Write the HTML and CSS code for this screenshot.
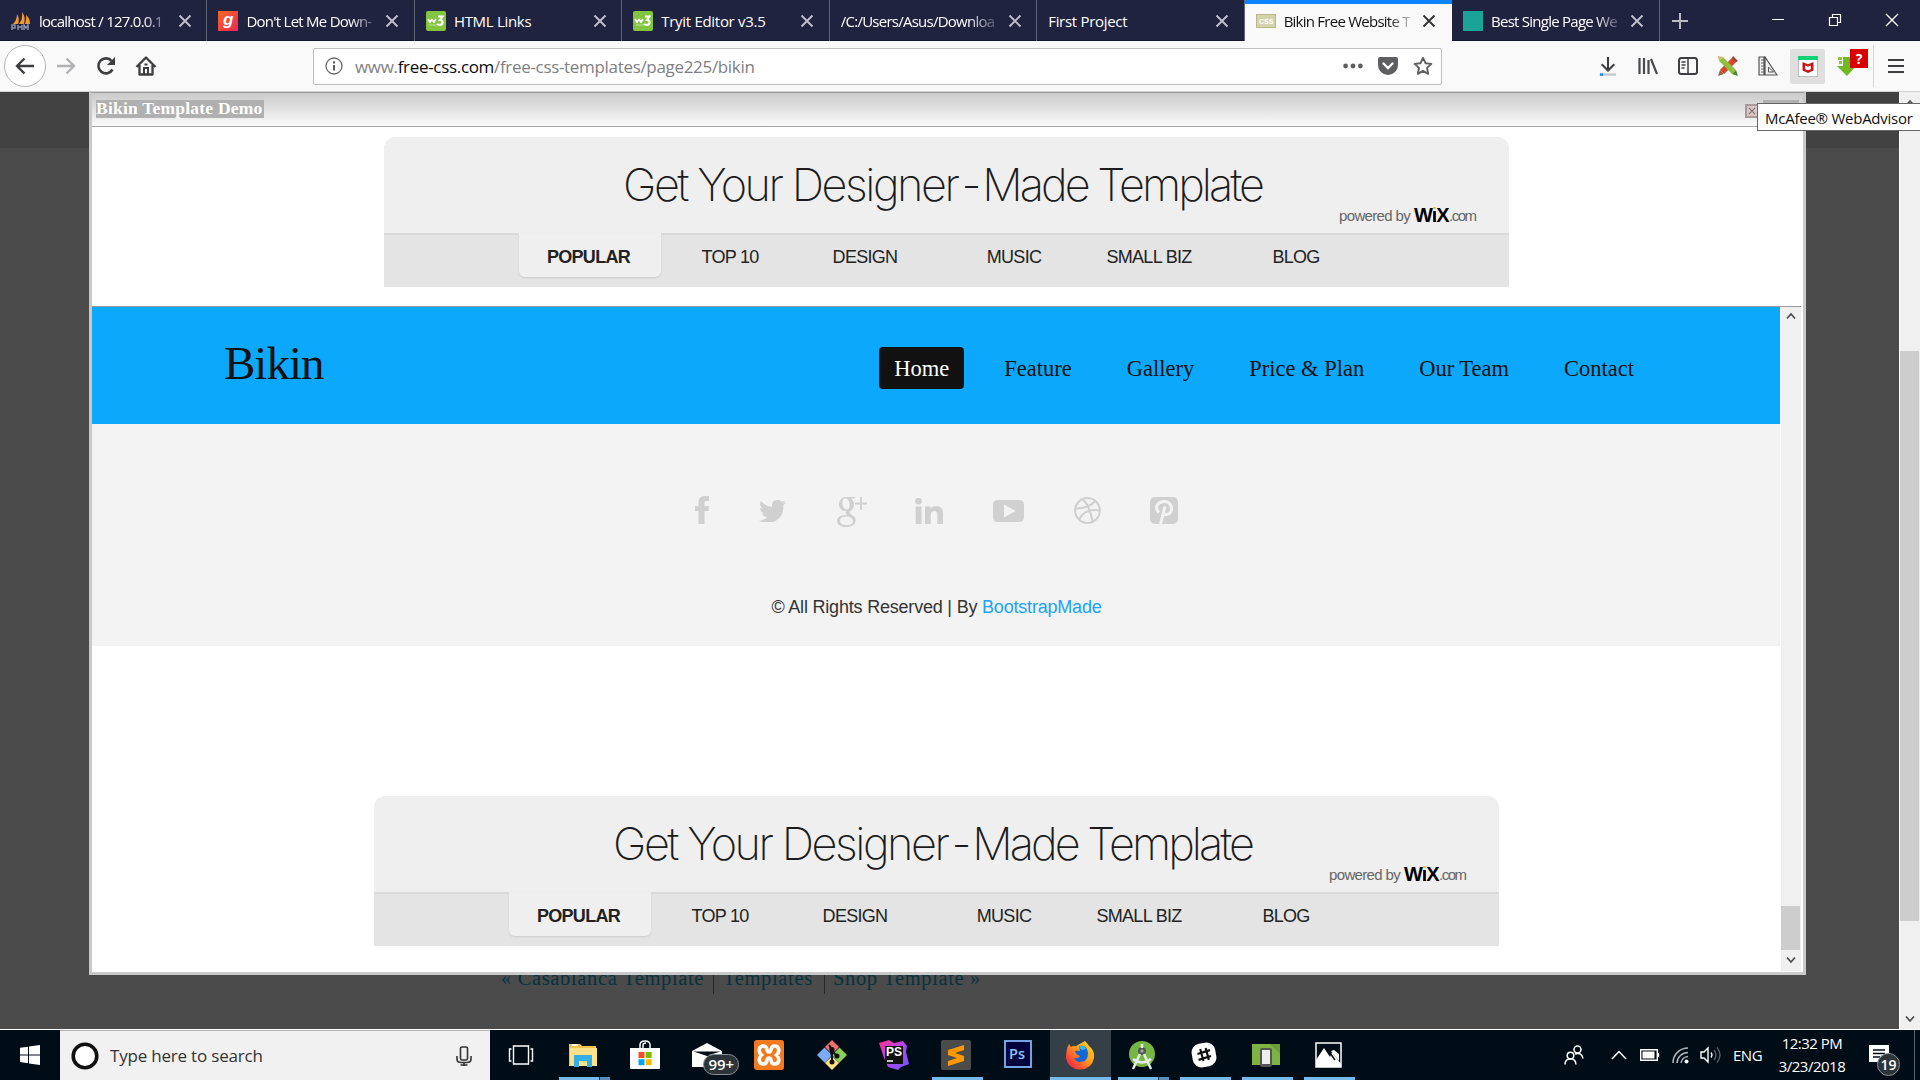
FILE: index.html
```html
<!DOCTYPE html>
<html lang="en">
<head>
<meta charset="utf-8">
<title>Bikin Free Website Template</title>
<link rel="stylesheet" href="styles.css">
</head>
<body>
<svg class="defs" width="0" height="0">
  <symbol id="x" viewBox="0 0 14 14"><path d="M1.500 1.500l11 11M12.500 1.500l-11 11" fill="none" stroke="currentColor" stroke-width="1.900"/></symbol>
  <symbol id="w3" viewBox="0 0 20 20"><rect width="20" height="20" rx="2" fill="#83c441"/><path d="M2 8l2 3 2-2.500 2 2.500 2-3" fill="none" stroke="#fff" stroke-width="1.700"/><path d="M12 5.500h4.500l-2.500 3.500c4 0 3 5-.5 5q-1.500 0-2.200-1.200" fill="none" stroke="#fff" stroke-width="2"/><path d="M3 14h8" stroke="#c4e3a4"/></symbol>
  <symbol id="up" viewBox="0 0 10 8"><path d="M1 6.500l4-4.500 4 4.500" fill="none" stroke="#505050" stroke-width="1.800"/></symbol>
  <symbol id="down" viewBox="0 0 10 8"><path d="M1 1.500l4 4.500 4-4.500" fill="none" stroke="#505050" stroke-width="1.800"/></symbol>
</svg>

<header class="tabs">
  <div class="tab">
    <svg class="fav" viewBox="0 0 20 20"><path d="M2 13Q6 9 6 3q3 5 1 10zM8 13q4-5 3-12 4 5 2 12zM14 13q2-5 1-9 4 3 4 9z" fill="#f59a2c"/><path d="M1 19v-5h3v3H1M7 19v-5M7 16h4M11 14v5M13 19v-5l2 3 2-3v5" fill="none" stroke="#8b90a8" stroke-width="1.500"/></svg>
    <span class="label fade">localhost / 127.0.0.1</span><svg class="close"><use href="#x"/></svg></div>
  <div class="tab"><svg class="fav" viewBox="0 0 20 20"><defs><linearGradient id="gg" x1="0" y1="0" x2="1" y2="1"><stop offset="0" stop-color="#f26a20"/><stop offset="1" stop-color="#ee2459"/></linearGradient></defs><rect width="20" height="20" fill="url(#gg)"/><text x="5" y="14" font-family="Liberation Sans" font-size="17" font-weight="bold" font-style="italic" fill="#fff">g</text></svg>
    <span class="label fade">Don't Let Me Down-</span><svg class="close"><use href="#x"/></svg></div>
  <div class="tab"><svg class="fav"><use href="#w3"/></svg><span class="label">HTML Links</span><svg class="close"><use href="#x"/></svg></div>
  <div class="tab"><svg class="fav"><use href="#w3"/></svg><span class="label">Tryit Editor v3.5</span><svg class="close"><use href="#x"/></svg></div>
  <div class="tab"><span class="label fade">/C:/Users/Asus/Downloa</span><svg class="close"><use href="#x"/></svg></div>
  <div class="tab"><span class="label">First Project</span><svg class="close"><use href="#x"/></svg></div>
  <div class="tab active"><svg class="fav" viewBox="0 0 20 20"><rect x="0" y="3" width="20" height="14" fill="#b9b98a"/><rect x="1" y="4" width="18" height="12" fill="#d3d3ae"/><text x="3" y="13" font-family="Liberation Sans" font-size="7" font-weight="bold" fill="#fff">CSS</text></svg>
    <span class="label fade">Bikin Free Website T</span><svg class="close"><use href="#x"/></svg></div>
  <div class="tab last"><svg class="fav" viewBox="0 0 20 20"><rect width="20" height="20" fill="#1aa497"/></svg>
    <span class="label fade">Best Single Page We</span><svg class="close"><use href="#x"/></svg></div>
  <svg class="plus" viewBox="0 0 18 18"><path d="M9 1v16M1 9h16" stroke="#b9bac6" stroke-width="2"/></svg>
  <div class="winbtns">
    <svg viewBox="0 0 14 14"><path d="M1 6.500h12" stroke="#fff"/></svg>
    <svg viewBox="0 0 14 14"><path d="M1.500 4.500h8v8h-8zM4.500 4V1.500h8v8H10" fill="none" stroke="#fff" stroke-width="1.200"/></svg>
    <svg viewBox="0 0 14 14"><path d="M1 1l12 12M13 1L1 13" stroke="#fff" stroke-width="1.300"/></svg>
  </div>
</header>

<nav class="toolbar">
  <div class="navbtns">
    <span class="back"><svg width="20" height="18" viewBox="0 0 20 18"><path d="M19 9H2M9.500 1.500L2 9l7.500 7.500" fill="none" stroke="#3e3e41" stroke-width="2.400"/></svg></span>
    <svg width="20" height="18" viewBox="0 0 20 18"><path d="M1 9h17M10.500 1.500L18 9l-7.500 7.500" fill="none" stroke="#b1b1b3" stroke-width="2.400"/></svg>
    <svg width="20" height="20" viewBox="0 0 20 20"><path d="M16.500 13.500a7.500 7.500 0 1 1-.8-8.500" fill="none" stroke="#3e3e41" stroke-width="2.600"/><path d="M19 1v8h-8z" fill="#3e3e41"/></svg>
    <svg width="22" height="20" viewBox="0 0 22 20"><path d="M1.500 11L11 1.500 20.500 11M4.500 9v9.500h13V9" fill="none" stroke="#3e3e41" stroke-width="2.300" stroke-linejoin="round"/><path d="M9 18v-6h4v6M9.500 8.500h3" stroke="#3e3e41" stroke-width="2" fill="none"/></svg>
  </div>
  <div class="urlbar">
    <svg width="18" height="18" viewBox="0 0 18 18"><circle cx="9" cy="9" r="8" fill="none" stroke="#6a6a6c" stroke-width="1.300"/><path d="M9 8v5.500M9 4.300v2.200" stroke="#5a5a5c" stroke-width="2"/></svg>
    <span class="url">www.<b>free-css.com</b>/free-css-templates/page225/bikin</span>
    <svg width="20" height="6" viewBox="0 0 20 6"><g fill="#5f5f61"><circle cx="2.600" cy="3" r="2.400"/><circle cx="10" cy="3" r="2.400"/><circle cx="17.400" cy="3" r="2.400"/></g></svg>
    <svg width="20" height="18" viewBox="0 0 20 18"><path d="M2 0h16q2 0 2 2v6a10 10 0 0 1-20 0V2q0-2 2-2z" fill="#5f5f61"/><path d="M5.500 6.500L10 11l4.500-4.500" fill="none" stroke="#fff" stroke-width="2.300" stroke-linecap="round"/></svg>
    <svg width="20" height="20" viewBox="0 0 20 20"><path d="M10 1.800l2.500 5.400 5.900.7-4.400 4 1.200 5.900L10 14.900l-5.200 2.900L6 11.900l-4.400-4 5.900-.7z" fill="none" stroke="#5f5f61" stroke-width="1.900" stroke-linejoin="round"/></svg>
  </div>
  <div class="tools">
    <span><svg width="18" height="20" viewBox="0 0 20 22"><path d="M10 1v14M3 9l7 7 7-7" fill="none" stroke="#3e3e41" stroke-width="2.300"/><path d="M1 20.500h18" stroke="#c6c6c8" stroke-width="2.500"/><path d="M1 20.500h3.500" stroke="#0a84ff" stroke-width="2.500"/></svg></span>
    <span><svg width="20" height="18" viewBox="0 0 20 18"><path d="M1.500 1v16M6 1v16M10.500 3v14M13 2l6 15" stroke="#4a4a4d" stroke-width="2.200"/></svg></span>
    <span><svg width="20" height="18" viewBox="0 0 20 18"><rect x="1" y="1" width="18" height="16" rx="2.500" fill="none" stroke="#3e3e41" stroke-width="2"/><path d="M10 1v16M3.500 5h4M3.500 8h4M3.500 11h3" stroke="#3e3e41" stroke-width="1.500"/></svg></span>
    <span><svg width="22" height="22" viewBox="0 0 22 22"><path d="M18 4L5 17" stroke="#d6452f" stroke-width="6"/><path d="M16 1l5 5-2 1-4-4z" fill="#8d4b35"/><path d="M4 4l13 13" stroke="#8fbf3c" stroke-width="5.500"/><path d="M1 1l5 1-4 4z" fill="#d8b26b"/><path d="M15 19l4-4 2 6z" fill="#4c8b2c"/><path d="M1 21l2-6 4 4z" fill="#8d6b45"/></svg></span>
    <span><svg width="20" height="20" viewBox="0 0 20 20"><path d="M1 1h5v18H1zM7 1v18h12z" fill="#eee" stroke="#555" stroke-width="1.200"/><path d="M10.500 11v5h5z" fill="#f9f9fa" stroke="#555"/><path d="M3 4h3M3 7h3M3 10h3M3 13h3M3 16h3" stroke="#666"/></svg></span>
    <span class="hot"><svg width="20" height="21" viewBox="0 0 20 21"><rect x=".5" y=".5" width="19" height="20" fill="#fff" stroke="#bcbcbc"/><path d="M0 0h20v4H0z" fill="#12d176"/><path d="M4.500 6l5.500 2.200L15.500 6v8.500L10 17l-5.500-2.500z" fill="#c01818"/><path d="M7.200 9.500l2.800 1.300 2.800-1.300v3.700L10 14.300l-2.800-1.100z" fill="#fff"/></svg></span>
    <span class="dl"><svg width="22" height="22" viewBox="0 0 22 22"><path d="M7 2h8v9h5l-9 10-10-10h6z" fill="#6fb821"/><path d="M2 2h4v3H2zM3 6h3v3H3z" fill="#8ac93b"/></svg><em>?</em></span>
    <i class="sep"></i>
    <svg width="16" height="16" viewBox="0 0 16 16"><path d="M0 2h16M0 8h16M0 14h16" stroke="#3e3e41" stroke-width="2.200"/></svg>
  </div>
</nav>

<main class="page">
  <div class="under">
    <div class="band"></div>
    <div class="pager"><a>« Casablanca Template</a><a>Templates</a><a>Shop Template »</a></div>
  </div>
  <div class="scroll outer"><svg><use href="#up"/></svg><div class="thumb"></div><svg><use href="#down"/></svg></div>

  <section class="modal">
    <div class="mhead"><span class="mtitle">Bikin Template Demo</span><span class="mx"><svg width="8" height="8"><use href="#x"/></svg></span><span class="mclose">Close</span></div>
    <div class="adrow">
      <div class="ad">
        <div class="adtop"><span class="adtitle">Get Your Designer<i> - </i><em>Made Template</em></span><span class="pow">powered by</span><span class="wix">W<u>i</u>X</span><span class="com">.com</span></div>
        <div class="adnav"><b>POPULAR</b><span class="n2">TOP 10</span><span class="n3">DESIGN</span><span class="n4">MUSIC</span><span class="n5">SMALL BIZ</span><span class="n6">BLOG</span></div>
      </div>
    </div>
    <div class="frame">
      <div class="content">
        <div class="hero"><div class="logo">Bikin</div><div class="menu"><a class="on">Home</a><a>Feature</a><a>Gallery</a><a>Price &amp; Plan</a><a>Our Team</a><a>Contact</a></div></div>
        <div class="foot">
          <div class="social">
            <svg class="s1" width="14" height="28" viewBox="0 0 14 28"><path d="M3.500 28V15H0v-5h3.500V7c0-5 2-7 6.500-7h4v5h-2.500C10 5 9.500 5.500 9.500 7v3H14l-.6 5H9.500v13z"/></svg>
            <svg class="s2" width="27" height="22" viewBox="0 0 27 22"><path d="M27 2.600a11 11 0 0 1-3.200.9A5.500 5.500 0 0 0 26.200.4a11 11 0 0 1-3.500 1.300 5.500 5.500 0 0 0-9.500 5.100A15.700 15.700 0 0 1 1.900 1a5.500 5.500 0 0 0 1.700 7.400 5.500 5.500 0 0 1-2.500-.7 5.500 5.500 0 0 0 4.400 5.500 5.500 5.500 0 0 1-2.500.1 5.500 5.500 0 0 0 5.200 3.800A11.100 11.100 0 0 1 0 20.500 15.700 15.700 0 0 0 24.200 5.500 11 11 0 0 0 27 2.600z"/></svg>
            <svg class="s3" width="30" height="30" viewBox="0 0 30 30"><path fill-rule="evenodd" d="M8.500 0H19l-2 1.500h-3c4 3 4 9.500 0 12-3 2-1 3 1 4.500 3 2 4 3.500 3.500 6C18 28 14 30 9 30c-6 0-9-2.500-9-6 0-4 4-6 10-6-1.500-1.300-1.500-2.500-1-4C4.500 14 2 11 2 7.500 2 3.500 5 0 8.500 0zM8 1.300c-2 .3-3 2.700-2.500 6 .6 3.500 2.500 5.500 4.500 5.300 2-.3 3-2.700 2.500-6C12 3 10 1 8 1.300zM10 19.500c-4 0-7 1.500-7 4.300 0 2.700 2.500 4.400 6.500 4.400S16 26.700 16 24.300c0-2-1.500-3-4-4.800z"/><path d="M23 0h2v5.500h5v1.900h-5v5.500h-2V7.400h-5V5.500h5z"/></svg>
            <svg class="s4" width="28" height="26" viewBox="0 0 28 26"><circle cx="3.500" cy="3" r="3.400"/><path d="M.7 8.500h5.800V26H.7zM10 8.500h5.400v2.400c1-1.700 3-2.800 5.500-2.800C26 8.100 28 11 28 16v10h-5.700v-9c0-2.500-.7-4-3-4-2.500 0-3.500 1.700-3.500 4v9H10z"/></svg>
            <svg class="s5" width="31" height="22" viewBox="0 0 31 22"><path fill-rule="evenodd" d="M5 0h21q5 0 5 5v12q0 5-5 5H5q-5 0-5-5V5q0-5 5-5zM11 4.500v13l11.500-6.500z"/></svg>
            <svg class="s6" width="27" height="27" viewBox="0 0 27 27"><g fill="none" stroke="#d0d0d0" stroke-width="2"><circle cx="13.500" cy="13.500" r="12.400"/><path d="M9 2c5 6 8 13 9.500 22.500M1.500 11.500c9 0 15-2 20-7.500M5 22.500c4-8 11-11 21-9"/></g></svg>
            <svg class="s7" width="28" height="27" viewBox="0 0 28 27"><rect width="28" height="27" rx="5"/><path d="M8.800 15.500C4 10 8 4.500 14.300 4.500c8.500 0 9.700 12 2.500 13-2.500.2-3.800-1.500-3.800-1.500M15 9.500L10.500 27" fill="none" stroke="#f3f3f3" stroke-width="3"/></svg>
          </div>
          <p>© All Rights Reserved | By <a>BootstrapMade</a></p>
        </div>
        <div class="ad second">
          <div class="adtop"><span class="adtitle">Get Your Designer<i> - </i><em>Made Template</em></span><span class="pow">powered by</span><span class="wix">W<u>i</u>X</span><span class="com">.com</span></div>
          <div class="adnav"><b>POPULAR</b><span class="n2">TOP 10</span><span class="n3">DESIGN</span><span class="n4">MUSIC</span><span class="n5">SMALL BIZ</span><span class="n6">BLOG</span></div>
        </div>
      </div>
      <div class="scroll inner"><svg><use href="#up"/></svg><div class="thumb"></div><svg><use href="#down"/></svg></div>
    </div>
  </section>
  <div class="tooltip">McAfee® WebAdvisor</div>
</main>

<footer class="taskbar">
  <div class="start"><svg width="20" height="20" viewBox="0 0 20 20"><path d="M0 2.800L8 1.700v7.700H0zM9 1.500L20 0v9.400H9zM0 10.400h8v7.800l-8-1.100zM9 10.400h11V20L9 18.400z" fill="#fff"/></svg></div>
  <div class="search"><svg width="28" height="28" viewBox="0 0 28 28"><circle cx="14" cy="14" r="11.800" fill="#fff" stroke="#111" stroke-width="3.600"/></svg><span>Type here to search</span><svg width="16" height="20" viewBox="0 0 16 20"><rect x="4.500" y="1" width="7" height="13" rx="1.500" fill="none" stroke="#333" stroke-width="1.600"/><path d="M1 10v3q0 3.500 4 3.500h6q4 0 4-3.500v-3M8 16.500V20M4.500 19h7" fill="none" stroke="#333" stroke-width="1.600"/></svg></div>
  <div class="apps">
    <div><svg width="26" height="20" viewBox="0 0 26 20"><path d="M5.500 1h15v18h-15zM3.500 4H1.500v12h2M22.500 4h2v12h-2" fill="none" stroke="#fff" stroke-width="1.400"/></svg></div>
    <div class="run two"><svg width="28" height="24" viewBox="0 0 28 24"><path d="M0 1h11l2 2h14v20H0z" fill="#f2c14c"/><path d="M1 5h27v18H1z" fill="#ffe08a"/><path d="M3 1h6v2H3z" fill="#fff"/><path d="M5 24V12h18v12h-5v-6h-8v6z" fill="#35aee6"/></svg></div>
    <div><svg width="30" height="30" viewBox="0 0 30 30"><path d="M10 9V5q0-4 5-4t5 4v4M13 9V5q0-2 3-2" fill="none" stroke="#fff" stroke-width="1.500"/><path d="M0 8h30v20q0 1-1 1H1q-1 0-1-1z" fill="#fff"/><path d="M8.500 12h6v6h-6z" fill="#f25022"/><path d="M15.700 12h6v6h-6z" fill="#7fba00"/><path d="M8.500 19.200h6v6h-6z" fill="#00a4ef"/><path d="M15.700 19.200h6v6h-6z" fill="#ffb900"/></svg></div>
    <div class="mail"><svg width="30" height="24" viewBox="0 0 30 24"><path d="M0 8L15 0l15 8v16H0z" fill="#fff"/><path d="M1.500 8.500h27L17 12l4 3z" fill="#000d17"/></svg><span>99+</span></div>
    <div><svg width="30" height="30" viewBox="0 0 30 30"><rect width="30" height="30" rx="3" fill="#f37a20"/><path d="M9.500 6c5 0 2 6 5.500 6s.5-6 5.500-6 5.500 6 2 9c3.500 3 3 9-2 9s-2-6-5.500-6-.5 6-5.500 6-5.500-6-2-9c-3.500-3-3-9 2-9z" fill="none" stroke="#fff" stroke-width="3.600"/></svg></div>
    <div><svg width="30" height="30" viewBox="0 0 30 30"><path d="M15 0l7 7-7 7-7-7z" fill="#f2706d"/><path d="M7.500 7.500L15 15l-7 8-8-8z" fill="#7cabf8"/><path d="M22.500 7.500L30 15l-8 8-7-8z" fill="#8cd05c"/><path d="M15 16l7 7-7 7-7-7z" fill="#ffe080"/><path d="M12 5l3 4v14M15 11l5 5" stroke="#111" stroke-width="2"/><g fill="#111"><circle cx="15" cy="9.500" r="2.500"/><circle cx="20" cy="16" r="2.500"/><circle cx="15" cy="22" r="2.500"/></g></svg></div>
    <div><svg width="30" height="30" viewBox="0 0 30 30"><defs><linearGradient id="pg" x1="0" y1="0" x2="1" y2="1"><stop offset="0" stop-color="#fc318c"/><stop offset=".5" stop-color="#b345f1"/><stop offset="1" stop-color="#6b57ff"/></linearGradient></defs><path d="M0 3l10-3 5 3 9-2 4 5-1 6 3 12-8 3-3 3-10-3-4-9z" fill="url(#pg)"/><rect x="6" y="6" width="18" height="18" fill="#111"/><path d="M8 21h6" stroke="#fff" stroke-width="1.500"/><text x="7" y="16" font-family="Liberation Sans" font-size="12" font-weight="bold" fill="#fff">PS</text></svg></div>
    <div class="run"><svg width="30" height="30" viewBox="0 0 30 30"><rect width="30" height="30" rx="2" fill="#4b4b4b"/><path d="M23 5v5l-9 3 9 3v5L7 26v-5l9-3-9-3v-5z" fill="#ff9800"/></svg></div>
    <div class="ps"><svg width="28" height="28" viewBox="0 0 28 28"><rect x="1" y="1" width="26" height="26" fill="#00033c" stroke="#7fb6f5" stroke-width="1.800"/><text x="5" y="19" font-family="Open Sans" font-size="14.500" font-weight="600" fill="#8fc4ff">Ps</text></svg></div>
    <div class="run cur"><svg width="28" height="29" viewBox="0 0 28 29"><defs><linearGradient id="fg" x1="1" y1="0" x2="0" y2="1"><stop offset="0" stop-color="#ffe226"/><stop offset=".45" stop-color="#ff9a1e"/><stop offset=".8" stop-color="#ff3a3a"/><stop offset="1" stop-color="#e31587"/></linearGradient></defs><path d="M19 0q3 3 4 5 6 5 5 12-2 11-14 11.500Q2 28 0 17 0 8 3 3l2 3q3-2 5-1z" fill="url(#fg)"/><path d="M13 5q8-2 9 7 0 9-8 9-4 0-6-4 4 1 6-2-4-1-5-5 2-1 5 0-1-3-1-5z" fill="#1267d6"/><path d="M13 5q5-1 7 3l-3 1q-3 0-4-4z" fill="#31b8f5"/></svg></div>
    <div class="run two"><svg width="28" height="30" viewBox="0 0 28 30"><circle cx="14" cy="14" r="13" fill="#78b643"/><circle cx="14" cy="11" r="4" fill="#4d5a55"/><path d="M14 4v4M12 14L5 29M16 14l7 15M5 19q9 7 18 0" fill="none" stroke="#e6ebe9" stroke-width="2.500"/><circle cx="14" cy="11" r="1.600" fill="#aaa"/></svg></div>
    <div class="run"><svg width="26" height="26" viewBox="0 0 24 24"><rect x="1" y="1" width="22" height="22" rx="8" fill="#fff" transform="rotate(-10 12 12)"/><path d="M8.500 6.500l3 11M13.500 5.500l3 11M6 11l11.500-3.500M7 16.500L18.500 13" stroke="#111" stroke-width="2"/></svg></div>
    <div class="run"><svg width="28" height="24" viewBox="0 0 28 24"><rect y="1" width="28" height="21" fill="#7cb342"/><path d="M18 1h10v10z" fill="#689f38"/><rect x="8" y="5" width="12" height="19" rx="2" fill="#555"/><rect x="10" y="7" width="8" height="14" fill="#eee"/></svg></div>
    <div class="run"><svg width="27" height="26" viewBox="0 0 27 26"><rect x="1" y="1" width="25" height="24" fill="#000d17" stroke="#fff" stroke-width="1.500"/><path d="M1 25V18l8-12 6 9 2-5 9 12v3z" fill="#fff"/><path d="M16 9l8 10V12l-5-4z" fill="#fff"/><path d="M15 11l5 7" stroke="#000d17" stroke-width="1.500"/></svg></div>
  </div>
  <div class="tray">
    <svg width="20" height="20" viewBox="0 0 20 20"><g fill="none" stroke="#fff" stroke-width="1.500"><circle cx="13.500" cy="4.500" r="3.500"/><circle cx="6.500" cy="10.500" r="3.300"/><path d="M1 19.500q0-5.500 5.500-5.700 5 0 5.500 5.700M11 9q7-2 8 4.500"/></g></svg>
    <svg class="t2" width="16" height="10" viewBox="0 0 16 10"><path d="M1 9l7-7.500L15 9" fill="none" stroke="#fff" stroke-width="1.500"/></svg>
    <svg class="t3" width="20" height="12" viewBox="0 0 20 12"><path d="M.7.7h16.600v10.600H.7zM18.500 4v4" fill="none" stroke="#fff" stroke-width="1.400"/><path d="M2.500 2.500h12v7h-12z" fill="#fff"/></svg>
    <svg class="t4" width="17" height="17" viewBox="0 0 17 17"><g fill="none" stroke="#aeb4b9" stroke-width="1.500"><path d="M1 16A15 15 0 0 1 16 1M5 16A11 11 0 0 1 16 5.500M9 16a7.500 7.500 0 0 1 7-6.500"/></g><circle cx="14.500" cy="14.500" r="2" fill="#fff"/></svg>
    <svg class="t5" width="21" height="18" viewBox="0 0 21 18"><path d="M1 6h3l4-4v14l-4-4H1z" fill="none" stroke="#fff" stroke-width="1.400"/><path d="M11 6.500q2 2.500 0 5" fill="none" stroke="#fff" stroke-width="1.300"/><path d="M14 4q4 5 0 10M17 1.500q6 7.500 0 15" fill="none" stroke="#59636b" stroke-width="1.300"/></svg>
    <span class="eng">ENG</span>
    <div class="clock"><span>12:32 PM</span><span>3/23/2018</span></div>
    <div class="note"><svg width="20" height="22" viewBox="0 0 20 22"><path d="M0 0h20v17H0z" fill="#fff"/><path d="M4 5h12M4 8.500h12M4 12h7" stroke="#000d17" stroke-width="1.300"/></svg><span>19</span></div>
    <i class="edge"></i>
  </div>
</footer>
</body>
</html>
```
FILE: styles.css
```css
* { box-sizing: border-box; }
body { margin: 0; width: 1920px; height: 1080px; overflow: hidden; display: flex; flex-direction: column; font-family: "Open Sans", "Noto Sans", sans-serif; }
svg { display: block; flex: none; }
.defs { position: absolute; }

/* tab strip */
.tabs { height: 41px; flex: none; display: flex; background: #202340; border-bottom: 1px solid #15172c; color: #fff; }
.tab { width: 207.450px; height: 41px; flex: none; display: flex; align-items: center; padding: 0 14.700px 0 11px; border-right: 1px solid #62647a; }
.tab .fav { width: 20px; height: 20px; margin-right: 8px; }
.tab .label { flex: 1; min-width: 0; overflow: hidden; white-space: nowrap; font-size: 15px; line-height: 22px; letter-spacing: -.3px; margin-right: 5px; }
.tab .fade { letter-spacing: -.75px; -webkit-mask-image: linear-gradient(90deg, #000 78%, transparent 100%); mask-image: linear-gradient(90deg, #000 78%, transparent 100%); }
.tab .close { width: 14px; height: 14px; color: #c0c1cc; }
.tab.active { background: #f9f9fa; color: #111; border-top: 4px solid #0a84ff; border-right: 0; padding-bottom: 4px; padding-right: 15.700px; }
.tab.active .close { color: #333; }
.plus { width: 18px; height: 18px; margin: 12px 0 0 11px; }
.winbtns { margin-left: auto; display: flex; gap: 43px; padding: 13px 21px 0 0; }
.winbtns svg { width: 14px; height: 14px; }

/* toolbar */
.toolbar { height: 51px; flex: none; display: flex; background: #f9f9fa; border-bottom: 1px solid #d2d2d2; align-items: center; }
.navbtns { width: 313px; display: flex; align-items: center; padding-left: 4px; gap: 19.500px; }
.navbtns .back { width: 42px; height: 42px; border: 1px solid #b5b5b6; border-radius: 50%; background: #fff; display: flex; align-items: center; justify-content: center; margin-right: -9.500px; }
.urlbar { width: 1129px; height: 37px; border: 1px solid #bdbdbf; border-radius: 2px; background: #fff; display: flex; align-items: center; gap: 15px; padding: 0 8px 0 11px; }
.url { flex: 1; margin-left: -3px; padding-top: 1px; font-size: 17px; line-height: 24px; letter-spacing: -.32px; color: #808082; white-space: nowrap; }
.url b { font-weight: 400; color: #0c0c0d; }
.tools { margin-left: 146px; display: flex; align-items: center; }
.tools span { width: 40px; height: 35px; display: flex; align-items: center; justify-content: center; position: relative; }
.tools .hot { width: 35px; margin: 0 2px; background: #dfdfe0; border-radius: 2px; }
.tools em { position: absolute; left: 23px; top: 0; width: 18px; height: 19px; background: #db0000; color: #fff; font: bold 14px/19px "Open Sans", sans-serif; text-align: center; }
.tools .sep { width: 1px; height: 42px; background: #d7d7d8; margin: 0 14px 0 6px; }

/* dimmed page */
.page { height: 937px; flex: none; position: relative; display: flex; background: #4b4b4b; }
.under { flex: 1; display: flex; flex-direction: column; justify-content: space-between; }
.band { height: 56px; background: #424242; }
.pager { display: flex; height: 65px; padding-left: 501px; font: 20.500px/28px "Liberation Serif", serif; letter-spacing: .65px; color: #07323e; white-space: nowrap; }
.pager a { height: 30px; margin-right: 8px; padding-right: 8px; border-right: 1px solid #292929; }
.pager a:last-child { border: 0; }
.pager a:first-child { width: 213px; }
.pager a:nth-child(2) { width: 102px; margin-left: 1px; }

.scroll { width: 21px; background: #f0f0f0; border-left: 1px solid #fff; display: flex; flex-direction: column; align-items: center; }
.scroll svg { width: 10px; height: 8px; }
.scroll .thumb { width: 19px; background: #cdcdcd; }
.outer { padding-top: 7px; padding-right: 1px; }
.outer .thumb { height: 570px; margin: 244px 0 94px; }
.inner { padding: 5px 1px 0 0; height: 664px; }
.inner .thumb { height: 44px; margin: 586px 0 6px; }

/* lightbox */
.modal { position: absolute; left: 89px; top: 0; width: 1717px; height: 883px; background: #fff; border: 3px solid #c9c9c9; border-top: 1px solid #999; }
.mhead { height: 34px; display: flex; background: linear-gradient(#cacaca, #fafafa); border-bottom: 1px solid #a5a5a5; padding: 7px 4px; }
.mtitle { height: 18px; width: 168px; background: #b0b0b0; color: #fff; font: bold 17.500px/17px "Liberation Serif", serif; letter-spacing: .22px; white-space: nowrap; }
.mx { margin: 4px 4px 0 auto; width: 14px; height: 14px; border: 2px solid #a99; background: #dcc5c5; color: #777; display: flex; align-items: center; justify-content: center; }
.mclose { width: 36px; height: 18px; background: #b0b0b0; color: #fff; font: bold 14px/18px "Liberation Serif", serif; }
.adrow { height: 180px; padding: 10px 0 0 292px; border-bottom: 1px solid #9a9a9a; margin-right: 2px; }
.ad { width: 1125px; height: 150px; border-radius: 12px 12px 0 0; background: #e4e4e4; overflow: hidden; font-family: "Liberation Sans", sans-serif; }
.adtop { height: 96px; background: #efefef; display: flex; white-space: nowrap; padding-left: 239px; }
.adtitle { width: 716px; font: 200 45px/95px Inter, Roboto, sans-serif; letter-spacing: -2.450px; color: #1c1c1c; }
.adtitle i { font-style: normal; letter-spacing: -8.500px; padding-right: 5px; }
.adtitle em { font-style: normal; letter-spacing: -2.950px; }
.pow, .com { font-size: 15px; line-height: 20px; letter-spacing: -.65px; margin-top: 69px; color: #666; }
.pow { width: 75px; }
.wix { width: 35px; margin-top: 67px; font-size: 20px; line-height: 22px; font-weight: bold; letter-spacing: -1px; color: #000; }
.wix u { text-decoration: none; background: linear-gradient(#f5c518 7px, #000 7px); -webkit-background-clip: text; background-clip: text; color: transparent; }
.com { letter-spacing: -1.500px; }
.adnav { height: 54px; display: flex; padding-left: 135px; border-top: 2px solid #dadada; font-size: 18px; line-height: 45px; letter-spacing: -.7px; color: #222; text-align: center; }
.adnav b { width: 142px; height: 44px; margin-top: -2px; padding-right: 3px; line-height: 49px; background: #efefef; border-radius: 0 0 6px 6px; box-shadow: 0 1px 2px #ccc; }
.n2 { width: 138px; } .n3 { width: 132px; } .n4 { width: 166px; } .n5 { width: 104px; } .n6 { width: 190px; }
.frame { display: flex; height: 665px; }
.content { width: 1688px; }
.hero { height: 117px; background: #0ca8fb; display: flex; padding: 0 131px 0 132px; justify-content: space-between; font-family: "Liberation Serif", serif; color: #111; }
.logo { font-size: 47px; line-height: 56px; padding-top: 28px; letter-spacing: -1px; }
.menu { display: flex; gap: 25px; padding-top: 40px; }
.menu a { height: 42px; padding: 0 15px; font-size: 22.500px; line-height: 43px; white-space: nowrap; border-radius: 4px; }
.menu .on { background: #111; color: #fff; }
.foot { height: 222px; background: #f3f3f3; font-family: "Liberation Sans", sans-serif; }
.social { display: flex; height: 106px; padding: 72px 0 0 603px; fill: #d0d0d0; }
.s2 { margin: 4px 0 0 50px; } .s3 { margin: 1px 0 0 51px; } .s4 { margin: 2px 0 0 48px; } .s5 { margin: 4px 0 0 50px; } .s6 { margin: 1px 0 0 50px; } .s7 { margin: 1px 0 0 49px; }
.foot p { margin: 65px 0 0 1px; text-align: center; font-size: 18px; line-height: 24px; color: #333; letter-spacing: -.2px; }
.foot a { color: #1ba3f8; }
.second { margin: 150px 0 0 282px; }

.tooltip { position: absolute; left: 1757px; top: 11px; width: 170px; height: 28px; border: 1px solid #666; background: #fff; padding-left: 7px; font-size: 15px; line-height: 28px; letter-spacing: -.25px; color: #111; white-space: nowrap; }

/* taskbar */
.taskbar { height: 51px; border-top: 1px solid #fff; background: #000d17; display: flex; color: #fff; }
.start { width: 60px; display: flex; align-items: center; justify-content: center; }
.search { width: 430px; background: #f1f1f1; border-top: 1px solid #b5b5b5; display: flex; align-items: center; padding: 0 18px 0 11px; color: #333; font-size: 17px; letter-spacing: -.2px; }
.search span { flex: 1; margin-left: 11px; }
.apps { display: flex; }
.apps div { width: 62.100px; height: 50px; display: flex; align-items: center; justify-content: center; position: relative; }
.apps .run::after { content: ""; position: absolute; left: 7px; bottom: 0; width: 51px; height: 3px; background: #76b9ed; }
.apps .two::after { background: linear-gradient(90deg, #76b9ed 40px, #20394c 40px, #20394c 41px, #5a8eb6 41px); }
.apps .cur { background: linear-gradient(#343f48, #343f48) 1px 0 / 61px 50px no-repeat; }
.apps .cur::after { left: 1px; width: 61px; }
.apps .ps { padding-bottom: 3px; }
.mail span { position: absolute; left: 27px; top: 24px; width: 36px; height: 21px; border-radius: 11px; border: 1px solid #8b9196; background: #2c3439; font-size: 15px; line-height: 19px; text-align: center; font-weight: 600; }
.tray { margin-left: auto; display: flex; align-items: center; }
.t2 { margin-left: 27px; } .t3 { margin-left: 13px; } .t4 { margin-left: 12px; } .t5 { margin-left: 11px; }
.eng { margin-left: 12px; width: 45px; font-size: 15px; letter-spacing: -.5px; }
.clock { width: 68px; display: flex; flex-direction: column; text-align: center; font-size: 15px; line-height: 23px; letter-spacing: -.5px; white-space: nowrap; }
.note { position: relative; margin: -4px 25px 0 23px; }
.note svg { margin-top: 5px; }
.note span { position: absolute; left: 8px; top: 13px; width: 23px; height: 23px; border: 1px solid #8b9196; border-radius: 50%; background: #2c3439; font-size: 14px; font-weight: 600; line-height: 21px; text-align: center; }
.edge { width: 1px; height: 50px; background: #5a636b; margin-right: 5px; }
```
